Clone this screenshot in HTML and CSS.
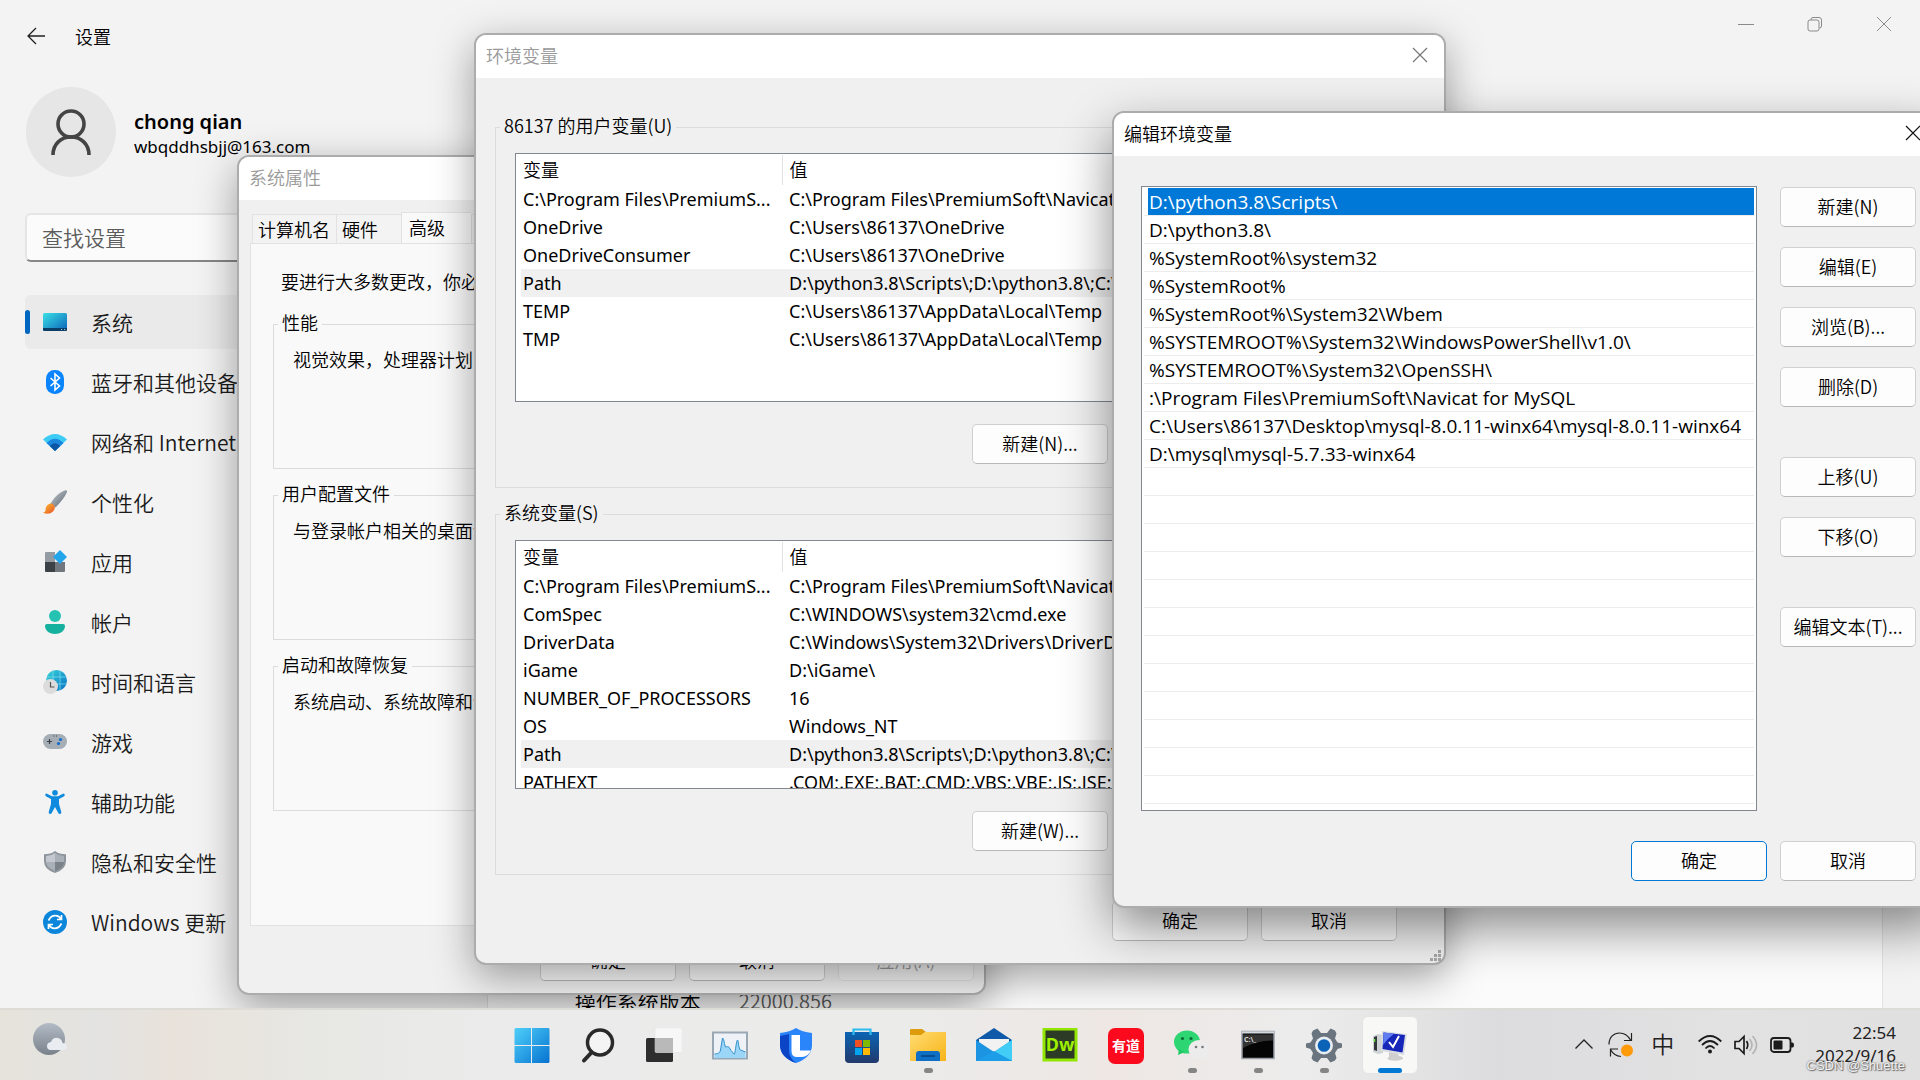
FILE: index.html
```html
<!DOCTYPE html>
<html lang="zh-CN">
<head>
  <meta charset="UTF-8" />
  <meta name="viewport" content="width=device-width, initial-scale=1.0" />
  <title>设置</title>
  <link rel="stylesheet" href="styles.css">
</head>
<body>
  <div class="desktop">

    <!-- Settings app -->
    <section class="settings">
      <header class="settings-bar">
        <button class="icon-btn" aria-label="返回">
          <svg width="20" height="20" viewBox="0 0 20 20" fill="none" stroke="#222" stroke-width="1.3"><path d="M19 10H2M10 2L2 10l8 8"/></svg>
        </button>
        <h1>设置</h1>
        <div class="caption-btns">
          <button class="icon-btn" aria-label="最小化"><svg width="16" height="16" viewBox="0 0 16 16" stroke="#8a8a8a"><path d="M0 8.500h16"/></svg></button>
          <button class="icon-btn" aria-label="还原"><svg width="16" height="16" viewBox="0 0 16 16" fill="none" stroke="#8a8a8a"><rect x="1" y="4" width="11" height="11" rx="2"/><path d="M4 4V3.500Q4 1.500 6 1.500h6Q14.500 1.500 14.500 4v6q0 2-2 2"/></svg></button>
          <button class="icon-btn" aria-label="关闭"><svg width="16" height="16" viewBox="0 0 16 16" stroke="#8a8a8a"><path d="M1 1l14 14M15 1L1 15"/></svg></button>
        </div>
      </header>

      <div class="settings-body">
        <aside class="sidebar">
          <div class="profile">
            <div class="avatar">
              <svg width="44" height="50" viewBox="0 0 44 50" fill="none" stroke="#444" stroke-width="3.600"><circle cx="22" cy="17" r="13"/><path d="M4 48C4 37 12 30 22 30s18 7 18 18"/></svg>
            </div>
            <div>
              <div class="profile-name">chong qian</div>
              <div class="profile-mail">wbqddhsbjj@163.com</div>
            </div>
          </div>
          <input class="search" type="text" placeholder="查找设置" aria-label="查找设置">
          <nav class="nav">
            <a class="active" href="#">
              <svg width="24" height="24" viewBox="0 0 24 24"><defs><linearGradient id="gSys" x1="0" y1="0" x2="1" y2="1"><stop offset="0" stop-color="#3ae0e6"/><stop offset="1" stop-color="#0b63b8"/></linearGradient></defs><rect y="3" width="24" height="18" rx="1.500" fill="url(#gSys)"/><path d="M0 18h24v1.500q0 1.500-1.500 1.500h-21Q0 21 0 19.500z" fill="#0a3e66"/><path d="M18 19.500h1.200M21 19.500h1.200" stroke="#9cd"/></svg>
              系统</a>
            <a href="#">
              <svg width="24" height="24" viewBox="0 0 24 24"><rect x="3" width="18" height="24" rx="8.500" fill="#0a84ff"/><path d="M7.500 8l9 8-4.500 4V4l4.500 4-9 8" fill="none" stroke="#fff" stroke-width="1.600"/></svg>
              蓝牙和其他设备</a>
            <a href="#">
              <svg width="24" height="24" viewBox="0 0 24 24"><path d="M0 9.500Q12-1.500 24 9.500L12 21z" fill="#3ccbf4"/><path d="M3.500 13Q12 4.500 20.500 13L12 21z" fill="#1a86dc"/><path d="M6.800 16Q12 10.500 17.200 16L12 21z" fill="#0b55a5"/></svg>
              网络和 Internet</a>
            <a href="#">
              <svg width="24" height="24" viewBox="0 0 24 24"><defs><linearGradient id="gBr" x1="0" y1="0" x2="1" y2="1"><stop offset="0" stop-color="#c5ccd3"/><stop offset="1" stop-color="#59636c"/></linearGradient><linearGradient id="gTip" x1="0" y1="0" x2="1" y2="1"><stop offset="0" stop-color="#fbc02d"/><stop offset="1" stop-color="#e8502a"/></linearGradient></defs><path d="M7.500 13.500C12 6 17 2 22.500.2Q24.300 0 24 2 21 9 12.500 17.500z" fill="url(#gBr)"/><path d="M4 15.500q3.500-3.500 7-.5 2 3-1 6.500-4 4-10 1.200 3-.7 2.500-3.200 0-2.500 1.500-4z" fill="url(#gTip)"/></svg>
              个性化</a>
            <a href="#">
              <svg width="24" height="24" viewBox="0 0 24 24"><path d="M3 2h9v10H2V3q0-1 1-1z" fill="#949ba3"/><path d="M2 12h10v10H3q-1 0-1-1z" fill="#3c4146"/><path d="M12 12h10v9q0 1-1 1h-9z" fill="#70777e"/><path d="M17 0l7 7-7 7-7-7z" fill="#22a5ea"/></svg>
              应用</a>
            <a href="#">
              <svg width="24" height="24" viewBox="0 0 24 24"><circle cx="12" cy="6" r="6" fill="#25c2b2"/><path d="M4 14h16q2 0 2 2c0 5-5 8-10 8S2 21 2 16q0-2 2-2z" fill="#16b09e"/></svg>
              帐户</a>
            <a href="#">
              <svg width="24" height="24" viewBox="0 0 24 24"><defs><linearGradient id="gGl" x1="0" y1="0" x2="1" y2="1"><stop offset="0" stop-color="#38d5d8"/><stop offset="1" stop-color="#0a6fc4"/></linearGradient></defs><circle cx="13.500" cy="10.500" r="10.500" fill="url(#gGl)"/><path d="M4 7h19M4 14h19M10 1v19M17 1v19" stroke="#7fe3f2" stroke-width=".7"/><circle cx="7.500" cy="16.500" r="7.500" fill="#dcdcdc"/><path d="M7.500 12v5h4" fill="none" stroke="#555" stroke-width="1.200"/></svg>
              时间和语言</a>
            <a href="#">
              <svg width="24" height="24" viewBox="0 0 24 24"><rect y="4" width="24" height="15" rx="7.500" fill="#a5adb5"/><path d="M4 11.500h5M6.500 9v5M10.500 6h1M13 6h1" stroke="#3c4146" stroke-width="1.200"/><circle cx="17.500" cy="9.500" r="1.600" fill="#0f6cc9"/><circle cx="15.500" cy="13.500" r="1.600" fill="#0f6cc9"/></svg>
              游戏</a>
            <a href="#">
              <svg width="24" height="24" viewBox="0 0 24 24" fill="#108ade"><circle cx="12" cy="2.800" r="2.800"/><path d="M3.500 3.600L9 6.200h6l5.500-2.600q1.500 0 1.200 1.700-.2.800-1 1.200L16 9v5l2.300 8q.3 2-1.500 2-1 0-1.500-1L12 17l-3.300 6q-.5 1-1.500 1-1.800 0-1.500-2L8 14V9L3.300 6.500q-.8-.4-1-1.200-.3-1.700 1.200-1.700z"/></svg>
              辅助功能</a>
            <a href="#">
              <svg width="24" height="24" viewBox="0 0 24 24"><path d="M12 1q4 3.300 11 3.300V11q0 8.500-11 12Q1 19.500 1 11V4.300Q8 4.300 12 1z" fill="#8d949b"/><path d="M12 3v9H3V6q5.500-.2 9-3z" fill="#c3c9cf"/><path d="M12 3v9h9V6q-5.500-.2-9-3z" fill="#a9b0b7"/><path d="M3 12h9v9q-8.500-3-9-9z" fill="#a9b0b7"/><path d="M21 12h-9v9q8.500-3 9-9z" fill="#7b828a"/></svg>
              隐私和安全性</a>
            <a href="#">
              <svg width="24" height="24" viewBox="0 0 24 24"><circle cx="12" cy="12" r="12" fill="#0c86da"/><path d="M5.500 10.500Q8 5.500 12.500 5.700q3.700.2 5.500 3.300M18.500 5v4.500H14M18.500 13.500Q16 18.500 11.500 18.300 7.800 18.100 6 15M5.500 19v-4.500H10" fill="none" stroke="#fff" stroke-width="1.700"/></svg>
              Windows 更新</a>
          </nav>
        </aside>
        <main class="about">
          <dl class="about-card">
            <dt>操作系统版本</dt>
            <dd>22000.856</dd>
          </dl>
        </main>
      </div>
    </section>

    <!-- System properties -->
    <section class="window sys-props">
      <header class="window-bar inactive"><h2>系统属性</h2></header>
      <div class="tabs">
        <button>计算机名</button><button>硬件</button><button class="current">高级</button><button>系统保护</button><button>远程</button>
      </div>
      <div class="tab-page">
        <p>要进行大多数更改，你必须作为管理员登录。</p>
        <fieldset><legend>性能</legend>视觉效果，处理器计划，内存使用，以及虚拟内存</fieldset>
        <fieldset><legend>用户配置文件</legend>与登录帐户相关的桌面设置</fieldset>
        <fieldset><legend>启动和故障恢复</legend>系统启动、系统故障和调试信息</fieldset>
      </div>
      <footer class="window-btns">
        <button class="btn">确定</button>
        <button class="btn">取消</button>
        <button class="btn" disabled>应用(A)</button>
      </footer>
    </section>

    <!-- Environment variables -->
    <section class="window env-vars">
      <header class="window-bar inactive">
        <h2>环境变量</h2>
        <button class="icon-btn" aria-label="关闭"><svg width="16" height="16" viewBox="0 0 16 16" stroke="#777" stroke-width="1.200"><path d="M1 1l14 14M15 1L1 15"/></svg></button>
      </header>
      <div class="env-body">
        <fieldset>
          <legend>86137 的用户变量(U)</legend>
          <div class="var-box">
            <table>
              <thead><tr><th class="col-name">变量</th><th>值</th></tr></thead>
              <tbody>
                <tr><td>C:\Program Files\PremiumS...</td><td>C:\Program Files\PremiumSoft\Navicat for MySQL</td></tr>
                <tr><td>OneDrive</td><td>C:\Users\86137\OneDrive</td></tr>
                <tr><td>OneDriveConsumer</td><td>C:\Users\86137\OneDrive</td></tr>
                <tr class="picked"><td>Path</td><td>D:\python3.8\Scripts\;D:\python3.8\;C:\Users\86137</td></tr>
                <tr><td>TEMP</td><td>C:\Users\86137\AppData\Local\Temp</td></tr>
                <tr><td>TMP</td><td>C:\Users\86137\AppData\Local\Temp</td></tr>
              </tbody>
            </table>
          </div>
          <div class="row-btns">
            <button class="btn">新建(N)...</button>
            <button class="btn">编辑(E)...</button>
            <button class="btn">删除(D)</button>
          </div>
        </fieldset>
        <fieldset>
          <legend>系统变量(S)</legend>
          <div class="var-box">
            <table>
              <thead><tr><th class="col-name">变量</th><th>值</th></tr></thead>
              <tbody>
                <tr><td>C:\Program Files\PremiumS...</td><td>C:\Program Files\PremiumSoft\Navicat for MySQL</td></tr>
                <tr><td>ComSpec</td><td>C:\WINDOWS\system32\cmd.exe</td></tr>
                <tr><td>DriverData</td><td>C:\Windows\System32\Drivers\DriverData</td></tr>
                <tr><td>iGame</td><td>D:\iGame\</td></tr>
                <tr><td>NUMBER_OF_PROCESSORS</td><td>16</td></tr>
                <tr><td>OS</td><td>Windows_NT</td></tr>
                <tr class="picked"><td>Path</td><td>D:\python3.8\Scripts\;D:\python3.8\;C:\WINDOWS</td></tr>
                <tr><td>PATHEXT</td><td>.COM;.EXE;.BAT;.CMD;.VBS;.VBE;.JS;.JSE;.WSF</td></tr>
              </tbody>
            </table>
          </div>
          <div class="row-btns">
            <button class="btn">新建(W)...</button>
            <button class="btn">编辑(I)...</button>
            <button class="btn">删除(L)</button>
          </div>
        </fieldset>
      </div>
      <footer class="window-btns">
        <button class="btn">确定</button>
        <button class="btn">取消</button>
      </footer>
      <svg class="grip" width="12" height="12" viewBox="0 0 12 12" fill="#a8a8a8"><path d="M9 0h3v3H9zM9 4h3v3H9zM5 4h3v3H5zM9 8h3v3H9zM5 8h3v3H5zM1 8h3v3H1z"/></svg>
    </section>

    <!-- Edit environment variable -->
    <section class="window edit-var">
      <header class="window-bar">
        <h2>编辑环境变量</h2>
        <button class="icon-btn" aria-label="关闭"><svg width="16" height="16" viewBox="0 0 16 16" stroke="#111" stroke-width="1.200"><path d="M1 1l14 14M15 1L1 15"/></svg></button>
      </header>
      <div class="edit-body">
        <ul class="path-list" role="listbox" aria-label="Path">
          <li role="option" class="picked">D:\python3.8\Scripts\</li>
          <li role="option">D:\python3.8\</li>
          <li role="option">%SystemRoot%\system32</li>
          <li role="option">%SystemRoot%</li>
          <li role="option">%SystemRoot%\System32\Wbem</li>
          <li role="option">%SYSTEMROOT%\System32\WindowsPowerShell\v1.0\</li>
          <li role="option">%SYSTEMROOT%\System32\OpenSSH\</li>
          <li role="option">:\Program Files\PremiumSoft\Navicat for MySQL</li>
          <li role="option">C:\Users\86137\Desktop\mysql-8.0.11-winx64\mysql-8.0.11-winx64</li>
          <li role="option">D:\mysql\mysql-5.7.33-winx64</li>
        </ul>
        <div class="side-btns">
          <button class="btn">新建(N)</button>
          <button class="btn">编辑(E)</button>
          <button class="btn">浏览(B)...</button>
          <button class="btn">删除(D)</button>
          <button class="btn spaced">上移(U)</button>
          <button class="btn">下移(O)</button>
          <button class="btn spaced">编辑文本(T)...</button>
        </div>
      </div>
      <footer class="window-btns">
        <button class="btn default">确定</button>
        <button class="btn">取消</button>
      </footer>
    </section>
  </div>

  <footer class="taskbar">
    <div class="weather">
      <svg width="36" height="36" viewBox="0 0 36 36"><defs><linearGradient id="gMoon" x1="0" y1="0" x2="0" y2="1"><stop offset="0" stop-color="#b3bcc6"/><stop offset="1" stop-color="#79818b"/></linearGradient></defs><circle cx="17" cy="17" r="16" fill="url(#gMoon)"/><path d="M18 28q-3-.5-3-4t4-4q2-5 7-4 4 1 4.500 5 4.500.5 4.500 3.500T32 28z" fill="#e9edf2"/></svg>
    </div>
    <div class="apps">
      <button class="app" aria-label="开始"><svg width="36" height="36" viewBox="0 0 36 36"><defs><linearGradient id="gWin" gradientUnits="userSpaceOnUse" x1="0" y1="0" x2="36" y2="36"><stop offset="0" stop-color="#4fd0fa"/><stop offset="1" stop-color="#0470cf"/></linearGradient></defs><path d="M1.500 0H17v17H.5V1zM18 0h16.500l1 1v16H18zM.5 18H17v17H1.500l-1-1zM18 18h17.500v16l-1 1H18z" fill="url(#gWin)"/></svg></button>
      <button class="app" aria-label="搜索"><svg width="36" height="36" viewBox="0 0 36 36" fill="none" stroke="#2a2a2a" stroke-linecap="round"><circle cx="20" cy="14.500" r="12.500" stroke-width="3.500" fill="#f4f4f4"/><path d="M11.500 24.500L4 32.500" stroke-width="4"/></svg></button>
      <button class="app" aria-label="任务视图"><svg width="36" height="36" viewBox="0 0 36 36"><rect y="10" width="27" height="24" rx="1.500" fill="#2e2e2e"/><rect x="9" y="0" width="27" height="24.500" rx="1.500" fill="#f7f7f7" stroke="#e0e0e0" stroke-width=".5"/><path d="M9 10h18v14.500H10.500L9 23z" fill="#b9b9b9"/></svg></button>
      <button class="app" aria-label="性能监视器"><svg width="36" height="36" viewBox="0 0 36 36"><rect x="1" y="4.500" width="34" height="26" fill="#eef2f6" stroke="#9aa8b5" stroke-width="2"/><path d="M2.500 26c3-.5 5 0 6-4l2-12c1.500 1 2 7 3 9 3-1 4 0 5 3 2 1 3 5 4 4 1-3 2-14 3-14s1 9 3 10 3 1 5 2v6h-31z" fill="#9bd6f8"/><path d="M2.500 26c3-.5 5 0 6-4l2-12c1.500 1 2 7 3 9 3-1 4 0 5 3 2 1 3 5 4 4 1-3 2-14 3-14s1 9 3 10 3 1 5 2" fill="none" stroke="#2f8fcb"/></svg></button>
      <button class="app" aria-label="电脑管家"><svg width="36" height="36" viewBox="0 0 36 36"><path d="M18 0q6 4 16 5v13q-1 12-16 17Q3 30 2 18V5Q12 4 18 0z" fill="#2a85fb"/><path d="M2 18V8l9-2v16q0 8 7 13Q3 30 2 18z" fill="#0b45c5"/><path d="M13.500 7H22v15.500h11Q30 29 24 29h-5q-5.500 0-5.500-6z" fill="#fff"/></svg></button>
      <button class="app" aria-label="Microsoft Store"><svg width="36" height="36" viewBox="0 0 36 36"><defs><linearGradient id="gSt" x1="0" y1="0" x2="0" y2="1"><stop offset="0" stop-color="#0a64b4"/><stop offset="1" stop-color="#223a6c"/></linearGradient></defs><path d="M9.500 8V1.500h17V8" fill="none" stroke="#2cbcf0" stroke-width="2.200"/><path d="M1 4h34v27q0 4-4 4H5q-4 0-4-4z" fill="url(#gSt)"/><path d="M9.500 4v3M26.500 4v3" stroke="#2cbcf0" stroke-width="2.200"/><path d="M11 12h7v7h-7z" fill="#f25022"/><path d="M19 12h7v7h-7z" fill="#7fba00"/><path d="M11 20h7v7h-7z" fill="#00a4ef"/><path d="M19 20h7v7h-7z" fill="#ffb900"/></svg></button>
      <button class="app running" aria-label="文件资源管理器"><svg width="36" height="36" viewBox="0 0 36 36"><defs><linearGradient id="gFo" x1="0" y1="0" x2="1" y2="1"><stop offset="0" stop-color="#ffdc73"/><stop offset="1" stop-color="#f8b417"/></linearGradient></defs><path d="M1 1h11l4 3h19q1 0 1 1v6H0V2q0-1 1-1z" fill="#dc9c0b"/><path d="M0 7h11l4-3h20q1 0 1 1v28H0z" fill="url(#gFo)"/><path d="M6 33v-7q0-3 3-3h18q3 0 3 3v7z" fill="#0f6fc4"/><path d="M11 28h14" stroke="#0a4a8c" stroke-width="1.800"/></svg></button>
      <button class="app" aria-label="邮件"><svg width="36" height="36" viewBox="0 0 36 36"><path d="M0 12L18 0l18 12v6H0z" fill="#0f5aa8"/><path d="M3 11h30v10L18 26 3 21z" fill="#f2f2f2"/><path d="M0 12l18 12L36 12v21H0z" fill="#1c94e2"/><path d="M18 24L36 12v21z" fill="#42cdf7"/><path d="M0 33L18 23l18 10z" fill="#1d9ce8"/></svg></button>
      <button class="app" aria-label="Dreamweaver"><svg width="36" height="36" viewBox="0 0 36 36"><rect x="2" y="1" width="32" height="31" fill="#2b3b25" stroke="#92e500" stroke-width="3"/><text x="18" y="23" text-anchor="middle" font-size="18" font-weight="700" fill="#9cf000">Dw</text></svg></button>
      <button class="app" aria-label="有道"><svg width="36" height="36" viewBox="0 0 36 36"><rect width="36" height="36" rx="7" fill="#fb0a1e"/><text x="18" y="23" text-anchor="middle" font-size="14" font-weight="700" fill="#fff">有道</text></svg></button>
      <button class="app running" aria-label="微信"><svg width="36" height="36" viewBox="0 0 36 36"><ellipse cx="13" cy="14" rx="13" ry="11.500" fill="#2ed573"/><path d="M5 21l-1 6 7-3z" fill="#20c864"/><circle cx="8.500" cy="10.500" r="1.600" fill="#0b6b35"/><circle cx="17" cy="10.500" r="1.600" fill="#0b6b35"/><ellipse cx="25" cy="21.500" rx="10.500" ry="9.500" fill="#ececec"/><path d="M28 29l4 2.500V27z" fill="#ececec"/><circle cx="22" cy="19" r="1.300" fill="#777"/><circle cx="28.500" cy="19" r="1.300" fill="#777"/></svg></button>
      <button class="app running" aria-label="命令提示符"><svg width="36" height="36" viewBox="0 0 36 36"><rect x="2" y="3.500" width="32" height="27" fill="#050505" stroke="#9aa0a8" stroke-width="1.500"/><path d="M2 3.500h32v2H2z" fill="#d5dae0"/><path d="M3 6.500h30v6Q18 12 3 20z" fill="#333"/><text x="4" y="14" font-size="7" font-weight="700" fill="#ddd">C:\_</text></svg></button>
      <button class="app running" aria-label="设置"><svg width="36" height="36" viewBox="0 0 36 36"><path d="M7 2.500L11.500.500 15 5h6L24.500.500 29 2.500l1.500 3L29 10.500l2.500 4L36 15.500v4L31.500 21 29 25l1.500 5-1.500 2.500-4.500 2L21 30h-6l-3.500 4.500-4.500-2L5.500 30 7 25l-2.500-4L0 19.500v-4L4.500 14.500 7 10.500 5.500 5.500z" fill="#69747f"/><circle cx="18" cy="17.500" r="9" fill="#e8edf2"/><circle cx="18" cy="17.500" r="6.300" fill="#0b63b8"/></svg></button>
      <button class="app running current" aria-label="系统属性"><svg width="36" height="36" viewBox="0 0 36 36"><path d="M1 8l5-2 5 1v18l-5 1-5-2z" fill="#cfd3d6"/><path d="M2 9l3-1v15l-3-1z" fill="#34383c"/><path d="M2.500 11v3" stroke="#5fe03a" stroke-width="1.500"/><path d="M17 24h8l2 4q5 1 4 3-5 3-14 1-3-2 0-3z" fill="#cfcfcf"/><path d="M10 3l25 3-3 21-23-4z" fill="#d9dde2"/><path d="M11.500 4.500L33 7l-2.500 17.500-20-3.500z" fill="#1526b8"/><path d="M11.500 4.500L22 5.700Q15 11 11 17z" fill="#5f7cf0"/><path d="M17 14l4 5 6-11" fill="none" stroke="#fff" stroke-width="2"/></svg></button>
    </div>
    <div class="tray">
      <svg width="20" height="36" viewBox="0 0 20 36" fill="none" stroke="#222" stroke-width="1.300"><path d="M1.500 21.500l8.500-8.500 8.500 8.500"/></svg>
      <svg width="26" height="36" viewBox="0 0 26 36" fill="none" stroke="#222" stroke-width="1.200"><path d="M1 17.500C1 10 6 6 11.500 6c5 0 8.500 2.500 11 7M23.500 6v7.500H16M2.500 29.500V22H10M2.500 22.500Q6 29 13 29.500"/><circle cx="19" cy="23.500" r="6" fill="#ff9a0a" stroke="none"/></svg>
      <span class="ime">中</span>
      <div class="status">
        <svg width="24" height="36" viewBox="0 0 24 36" fill="none" stroke="#1c1c1c" stroke-width="1.800"><path d="M.7 14.500Q12 3.500 23.300 14.500M4 18Q12 10 20 18M7.500 21.500Q12 16.500 16.500 21.500"/><circle cx="12" cy="24.500" r="2" fill="#1c1c1c" stroke="none"/></svg>
        <svg width="24" height="36" viewBox="0 0 24 36" fill="none" stroke="#1c1c1c" stroke-width="1.700"><path d="M1 14.500h4L10 9.500v17l-5-5H1zM12.500 14q2.500 4 0 8"/><path d="M15.500 12q5 6 0 12M18.500 9q8 9 0 18" stroke="#b5b5b5"/></svg>
        <svg width="24" height="36" viewBox="0 0 24 36"><rect x="1" y="11" width="19.500" height="14" rx="3" fill="none" stroke="#1c1c1c" stroke-width="1.800"/><rect x="3.500" y="13.500" width="9" height="9" rx="1" fill="#1c1c1c"/><path d="M21 15.500h1.500q1.500 0 1.500 2.500t-1.500 2.500H21z" fill="#1c1c1c"/></svg>
      </div>
      <div class="clock">22:54<br>2022/9/16</div>
    </div>
    <span class="watermark">CSDN @Shuette</span>
  </footer>
</body>
</html>
```

FILE: styles.css
```css
:root {
  --face: #f0f0f0;
  --line: #dcdcdc;
  --accent: #0067c0;
  --ui: "Noto Sans CJK SC", sans-serif;
  --latin: "Noto Sans", "Noto Sans CJK SC", sans-serif;
}
* {
  box-sizing: border-box;
}
body {
  margin: 0;
  height: 100vh;
  display: flex;
  flex-direction: column;
  overflow: hidden;
  font-family: var(--ui);
  font-size: 18px;
  font-weight: 350;
  line-height: 28px;
  color: #000;
}
h1, h2, p, ul, dl, dd {
  margin: 0;
  padding: 0;
  font-size: 18px;
  font-weight: inherit;
}
button {
  font: inherit;
  color: inherit;
}
svg {
  display: block;
  flex: none;
}
svg text {
  font-family: var(--latin);
}
.icon-btn {
  padding: 0;
  border: none;
  background: none;
}

/* Settings */
.desktop {
  position: relative;
  flex: 1;
  min-height: 0;
  overflow: hidden;
  background: #f3f3f3;
}
.settings {
  height: 100%;
  display: flex;
  flex-direction: column;
}
.settings-bar {
  display: flex;
  align-items: center;
  height: 72px;
  padding-left: 26px;
}
.settings-bar h1 {
  margin-left: 29px;
}
.caption-btns {
  display: flex;
  gap: 53px;
  align-self: flex-start;
  margin-left: auto;
  padding: 16px 28px;
}
.settings-body {
  flex: 1;
  min-height: 0;
  display: flex;
  gap: 26px;
}
.sidebar {
  width: 24%;
  padding: 15px 0 0 25px;
}
.profile {
  display: flex;
  align-items: center;
  gap: 18px;
  padding-left: 1px;
}
.avatar {
  display: flex;
  align-items: center;
  justify-content: center;
  width: 90px;
  height: 90px;
  border-radius: 50%;
  background: #e6e6e6;
}
.profile-name {
  padding-top: 3px;
  font-family: var(--latin);
  font-size: 20px;
  font-weight: 600;
  line-height: 26px;
}
.profile-mail {
  font-family: var(--latin);
  font-size: 17px;
  font-weight: 400;
  line-height: 24px;
}
.search {
  width: 100%;
  height: 49px;
  margin: 36px 0 33px;
  padding: 0 15px 2px;
  border: 2px solid #e5e5e5;
  border-bottom-color: #868686;
  border-radius: 6px;
  background: #fbfbfb;
  font-family: var(--ui);
  font-size: 21px;
  font-weight: inherit;
}
.search::placeholder {
  color: #5c5c5c;
}
.nav {
  display: flex;
  flex-direction: column;
  gap: 6px;
}
.nav a {
  display: flex;
  align-items: center;
  gap: 24px;
  height: 54px;
  padding-left: 18px;
  border-radius: 6px;
  font-size: 21px;
  color: #1a1a1a;
  text-decoration: none;
}
.nav a.active {
  padding-left: 0;
  background: #eaeaea;
}
.nav a.active::before {
  content: "";
  width: 5px;
  height: 24px;
  margin-right: -11px;
  border-radius: 3px;
  background: var(--accent);
}
.about {
  flex: 1;
  display: flex;
  flex-direction: column;
  justify-content: flex-end;
  padding-right: 37px;
}
.about-card {
  display: flex;
  align-items: flex-end;
  height: 40%;
  margin-bottom: -8px;
  padding-left: 87px;
  border: 1px solid #e2e2e2;
  background: #fbfbfb;
  font-size: 21px;
}
.about-card dt {
  width: 164px;
}
.about-card dd {
  font-size: 20px;
  color: #5c5c5c;
}

/* Dialog windows */
.window {
  position: absolute;
  display: flex;
  flex-direction: column;
  border: 2px solid #acacac;
  border-radius: 12px;
  background: var(--face);
  background-clip: padding-box;
  box-shadow: 0 12px 40px rgba(0, 0, 0, 0.36);
}
.window-bar {
  display: flex;
  align-items: center;
  justify-content: space-between;
  height: 43px;
  padding: 0 16px 3px 10px;
  border-radius: 10px 10px 0 0;
  background: #fff;
}
.window-bar.inactive {
  color: #999;
}
.window-btns {
  display: flex;
  justify-content: flex-end;
  gap: 13px;
}
.btn {
  width: 136px;
  height: 40px;
  padding: 0 0 2px;
  border: 1px solid #d0d0d0;
  border-bottom-color: #b8b8b8;
  border-radius: 5px;
  background: #fdfdfd;
}
.btn.default {
  border-color: #0078d4;
}
.btn:disabled {
  border-color: #e2e2e2;
  background: #f5f5f5;
  color: #9a9a9a;
}
fieldset {
  margin: 0;
  padding: 0;
  border: 1px solid var(--line);
}
legend {
  margin-left: -15px;
  padding: 0 4px 4px;
  line-height: 22px;
}

.sys-props {
  left: 237px;
  top: 155px;
  width: 749px;
  padding-bottom: 12px;
}
.tabs {
  display: flex;
  align-items: flex-end;
  margin: 12px 0 -1px 13px;
}
.tabs button {
  height: 30px;
  padding: 0 23px 0 5px;
  border: 1px solid #e2e2e2;
  border-right: none;
  background: #f3f3f3;
  line-height: 26px;
}
.tabs button:first-child {
  padding-right: 6px;
}
.tabs button.current {
  height: 32px;
  padding: 0 26px 4px 7px;
  border-bottom: none;
  background: #f9f9f9;
}
.tab-page {
  display: flex;
  flex-direction: column;
  gap: 13px;
  margin: 0 11px 15px;
  padding: 23px 22px 114px;
  border: 1px solid #e2e2e2;
  background: #f9f9f9;
}
.tab-page p {
  margin-bottom: 3px;
  padding-left: 8px;
}
.tab-page fieldset {
  height: 158px;
  padding: 8px 19px;
}
.sys-props .window-btns {
  padding-right: 10px;
}

.env-vars {
  left: 474px;
  top: 33px;
  width: 972px;
  padding-bottom: 22px;
}
.env-body {
  display: flex;
  flex-direction: column;
  gap: 13px;
  padding: 36px 19px 26px;
}
.env-body fieldset {
  padding: 13px 18px 23px 19px;
}
.var-box {
  height: 249px;
  padding: 1px 2px 0 5px;
  border: 1px solid #828790;
  background: #fff;
  overflow: hidden;
}
.var-box table {
  width: 100%;
  table-layout: fixed;
  border-collapse: collapse;
  text-align: left;
}
.var-box th {
  height: 30px;
  padding: 0 7px 2px;
  font-weight: inherit;
  line-height: 26px;
}
.var-box .col-name {
  width: 261px;
  border-right: 1px solid #e2e2e2;
}
.var-box td {
  height: 28px;
  padding: 0 7px;
  font-family: var(--latin);
  font-weight: 400;
  white-space: nowrap;
  overflow: hidden;
}
.var-box td:first-child, .var-box th:first-child {
  padding-right: 0;
  padding-left: 2px;
}
.var-box .picked {
  background: var(--face);
}
.row-btns {
  display: flex;
  justify-content: flex-end;
  gap: 13px;
  margin-top: 22px;
}
.env-vars .window-btns {
  padding-right: 47px;
}
.grip {
  position: absolute;
  right: 3px;
  bottom: 1px;
}

.edit-var {
  left: 1112px;
  top: 111px;
  width: 834px;
  padding-bottom: 25px;
  box-shadow: 0 20px 50px rgba(0, 0, 0, 0.46);
}
.edit-var .window-bar {
  padding-right: 23px;
}
.edit-body {
  display: flex;
  gap: 23px;
  padding: 30px 28px 30px 27px;
}
.path-list {
  flex: 1;
  height: 625px;
  padding: 1px 2px 0;
  border: 1px solid #828790;
  background: repeating-linear-gradient(#fff 0 27px, #ececec 27px 28px) content-box, #fff;
  list-style: none;
  font-family: "Open Sans", var(--latin);
  font-size: 19px;
  font-weight: 400;
}
.path-list li {
  height: 28px;
  margin-left: 4px;
  padding-left: 1px;
  border-bottom: 1px solid transparent;
  background-clip: padding-box;
  line-height: 28px;
  white-space: nowrap;
}
.path-list .picked {
  background-color: #0078d7;
  color: #fff;
}
.side-btns {
  display: flex;
  flex-direction: column;
  gap: 20px;
  padding-top: 1px;
}
.side-btns .spaced {
  margin-top: 30px;
}
.edit-var .window-btns {
  padding-right: 28px;
}

/* Taskbar */
.taskbar {
  position: relative;
  display: grid;
  grid-template-columns: 1fr auto 1fr;
  align-items: center;
  height: 72px;
  border-top: 2px solid #dddbd6;
  background: linear-gradient(90deg, #e6e3db 0, #e3e3e1 5%, #e9e2db 9%, #e7e7e3 16%, #ebebeb 25%, #ebebea 48%, #eee7e4 58%, #ececec 68%, #dcdcde 78%, #e2e2e3 90%, #e0e0e0);
}
.weather {
  padding-left: 32px;
  margin-top: -10px;
}
.apps {
  display: flex;
  gap: 10px;
  padding-left: 2px;
}
.app {
  position: relative;
  display: flex;
  justify-content: center;
  width: 56px;
  height: 58px;
  padding: 11px 0 0;
  border: 1px solid transparent;
  border-radius: 6px;
  background: none;
}
.app.current {
  border-color: #e4e4e4;
  background: #f8f8f7;
}
.app.running::after {
  content: "";
  position: absolute;
  bottom: 0;
  width: 9px;
  height: 5px;
  border-radius: 3px;
  background: #858585;
}
.app.current::after {
  width: 24px;
  background: #0078d4;
}
.tray {
  display: flex;
  align-items: center;
  justify-content: flex-end;
  gap: 14px;
  padding-right: 24px;
  color: #222;
}
.ime {
  margin: 0 10px 0 3px;
  padding-bottom: 4px;
  font-size: 23px;
}
.status {
  display: flex;
  gap: 12px;
}
.clock {
  margin-left: 7px;
  padding-bottom: 2px;
  font-family: var(--latin);
  font-size: 17px;
  font-weight: 400;
  line-height: 23px;
  text-align: right;
}
.watermark {
  position: absolute;
  right: 15px;
  bottom: 4px;
  font-family: "Liberation Sans", sans-serif;
  font-size: 13px;
  font-weight: 400;
  line-height: 20px;
  color: #f2f2f2;
  text-shadow: 0 0 2px #555, 1px 1px 1px #777;
}
```
